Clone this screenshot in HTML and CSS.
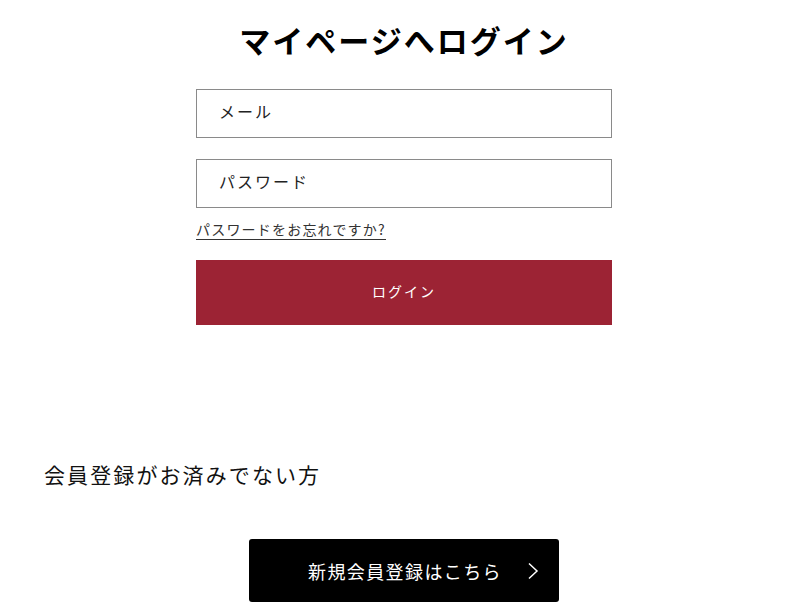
FILE: index.html
```html
<!DOCTYPE html>
<html lang="ja">
<head>
<meta charset="utf-8">
<link rel="stylesheet" href="styles.css">
</head>
<body>
<div class="page">
  <section class="login">
    <h1 class="title">マイページへログイン</h1>
    <form class="form">
      <input class="field" type="email" placeholder="メール">
      <input class="field" type="password" placeholder="パスワード">
      <a class="forgot" href="#">パスワードをお忘れですか?</a>
      <button class="submit" type="button">ログイン</button>
    </form>
  </section>
  <section class="register">
    <h2 class="reg-title">会員登録がお済みでない方</h2>
    <div class="reg-wrap">
      <a class="reg-btn" href="#">
        <span class="reg-label">新規会員登録はこちら</span>
        <svg class="chev" width="12" height="18" viewBox="0 0 12 18"><path d="M2 1.5 L10 9 L2 16.5" fill="none" stroke="#fff" stroke-width="1.5"/></svg>
      </a>
    </div>
  </section>
</div>
</body>
</html>
```
FILE: styles.css
```css
* { box-sizing: border-box; }
html, body { margin: 0; padding: 0; background: #fff; }
body {
  font-family: "Noto Sans CJK JP", "Noto Sans", sans-serif;
  color: #111;
}
.page {
  width: 800px;
  padding-left: 8px;
}
.login {
  display: flex;
  flex-direction: column;
  align-items: center;
  padding-top: 17px;
}
.title {
  margin: 0;
  font-size: 31px;
  font-weight: 700;
  letter-spacing: 2px;
  line-height: 46px;
  color: #000;
}
.form {
  width: 416px;
  display: flex;
  flex-direction: column;
  margin-top: 26px;
}
.field {
  height: 49px;
  border: 1px solid #8a8a8a;
  padding: 0 22px 5px;
  font-family: inherit;
  font-size: 16px;
  letter-spacing: 2px;
  margin: 0 0 21px 0;
  outline: none;
}
.field::placeholder { color: #222; opacity: 1; }
.field + .field { margin-bottom: 12px; }
.forgot {
  align-self: flex-start;
  font-size: 14px;
  letter-spacing: 1.2px;
  color: #333;
  text-decoration: none;
  border-bottom: 1.5px solid #333;
  line-height: 19px;
}
.submit {
  margin-top: 20px;
  height: 65px;
  border: none;
  padding: 0 0 3px;
  background: #9c2334;
  color: #fff;
  font-family: inherit;
  font-size: 14px;
  letter-spacing: 2px;
}
.register {
  margin-top: 134px;
}
.reg-title {
  margin: 0 0 0 36px;
  font-size: 21px;
  font-weight: 400;
  letter-spacing: 2.1px;
  line-height: 30px;
  color: #111;
}
.reg-wrap {
  display: flex;
  justify-content: center;
  margin-top: 50px;
}
.reg-btn {
  width: 310px;
  height: 63px;
  background: #000;
  border-radius: 3px;
  display: flex;
  align-items: center;
  justify-content: flex-end;
  padding-right: 20px;
  gap: 25px;
  text-decoration: none;
}
.reg-label {
  color: #fff;
  font-size: 18px;
  letter-spacing: 1.4px;
}
.chev { display: block; }
```
